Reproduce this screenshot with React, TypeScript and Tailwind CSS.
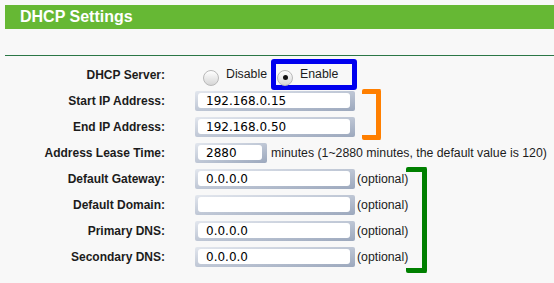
import type { ReactNode } from 'react'

function Radio({ checked }: { checked?: boolean }) {
  return (
    <span className="mt-[6px] w-[16px] h-[16px] shrink-0 rounded-full border border-[#b9b9b9] bg-gradient-to-b from-[#ffffff] to-[#d6d6d6] flex items-center justify-center">
      {checked && <span className="w-[5px] h-[5px] rounded-full bg-[#111]" />}
    </span>
  )
}

function Field({ value, width }: { value: string; width: string }) {
  return (
    <div className={`${width} h-[20px] shrink-0 rounded-[2px] bg-gradient-to-br from-[#e3e7ee] to-[#9ca8bd] pt-[2px] pl-[3px] pr-[5px] pb-[3px]`}>
      <input
        readOnly
        value={value}
        className="block w-full h-full rounded-[3px] bg-white pl-[8px] outline-none font-['DejaVu_Sans',sans-serif] text-[12px] text-black"
      />
    </div>
  )
}

function Row({ label, children }: { label: string; children: ReactNode }) {
  return (
    <div className="flex items-center h-[20px]">
      <div className="w-[160px] shrink-0 text-right font-bold text-[12px] text-[#1c1c1c]">{label}</div>
      <div className="ml-[30px] flex items-center">{children}</div>
    </div>
  )
}

const optional = [
  { label: 'Default Gateway:', value: '0.0.0.0' },
  { label: 'Default Domain:', value: '' },
  { label: 'Primary DNS:', value: '0.0.0.0' },
  { label: 'Secondary DNS:', value: '0.0.0.0' },
]

export default function App() {
  return (
    <div className="relative w-[554px] h-[283px] overflow-hidden bg-[#f8f8f8] pt-[5px] pl-[5px] font-['Liberation_Sans',Arial,sans-serif] text-[#1c1c1c]">
      <div className="h-[24px] bg-[#66b834] flex items-center pl-[15px] text-white font-bold text-[16px]">
        DHCP Settings
      </div>
      <div className="mt-[26px] h-px bg-[#2b7746]" />

      <div className="mt-[3px] h-[31px] flex items-center">
        <div className="w-[160px] shrink-0 text-right font-bold text-[12px]">DHCP Server:</div>
        <div className="ml-[38px] flex items-center gap-[7px]">
          <Radio />
          <span className="text-[12.3px]">Disable</span>
        </div>
        <div className="ml-[4px] h-[31px] border-[5px] border-[#0000ee] rounded-[3px] flex items-center gap-[7px] pl-[1px] pr-[14px]">
          <Radio checked />
          <span className="text-[12.3px]">Enable</span>
        </div>
      </div>

      <div className="mt-[1px] flex flex-col gap-[6px]">
        <Row label="Start IP Address:">
          <Field value="192.168.0.15" width="w-[160px]" />
        </Row>
        <Row label="End IP Address:">
          <Field value="192.168.0.50" width="w-[160px]" />
        </Row>
        <Row label="Address Lease Time:">
          <Field value="2880" width="w-[72px]" />
          <span className="ml-[4px] text-[12.3px] whitespace-nowrap">minutes (1~2880 minutes, the default value is 120)</span>
        </Row>
        {optional.map((r) => (
          <Row key={r.label} label={r.label}>
            <Field value={r.value} width="w-[160px]" />
            <span className="ml-[2px] text-[12.3px]">(optional)</span>
          </Row>
        ))}
      </div>

      {/* annotation brackets */}
      <div className="absolute left-[362px] top-[89px] w-[19px] h-[51px] border-t-[5px] border-r-[5px] border-b-[5px] border-[#ff7f00] rounded-[2px]" />
      <div className="absolute left-[406px] top-[167px] w-[21px] h-[106px] border-t-[5px] border-r-[5px] border-b-[5px] border-[#008000] rounded-[2px]" />
    </div>
  )
}
